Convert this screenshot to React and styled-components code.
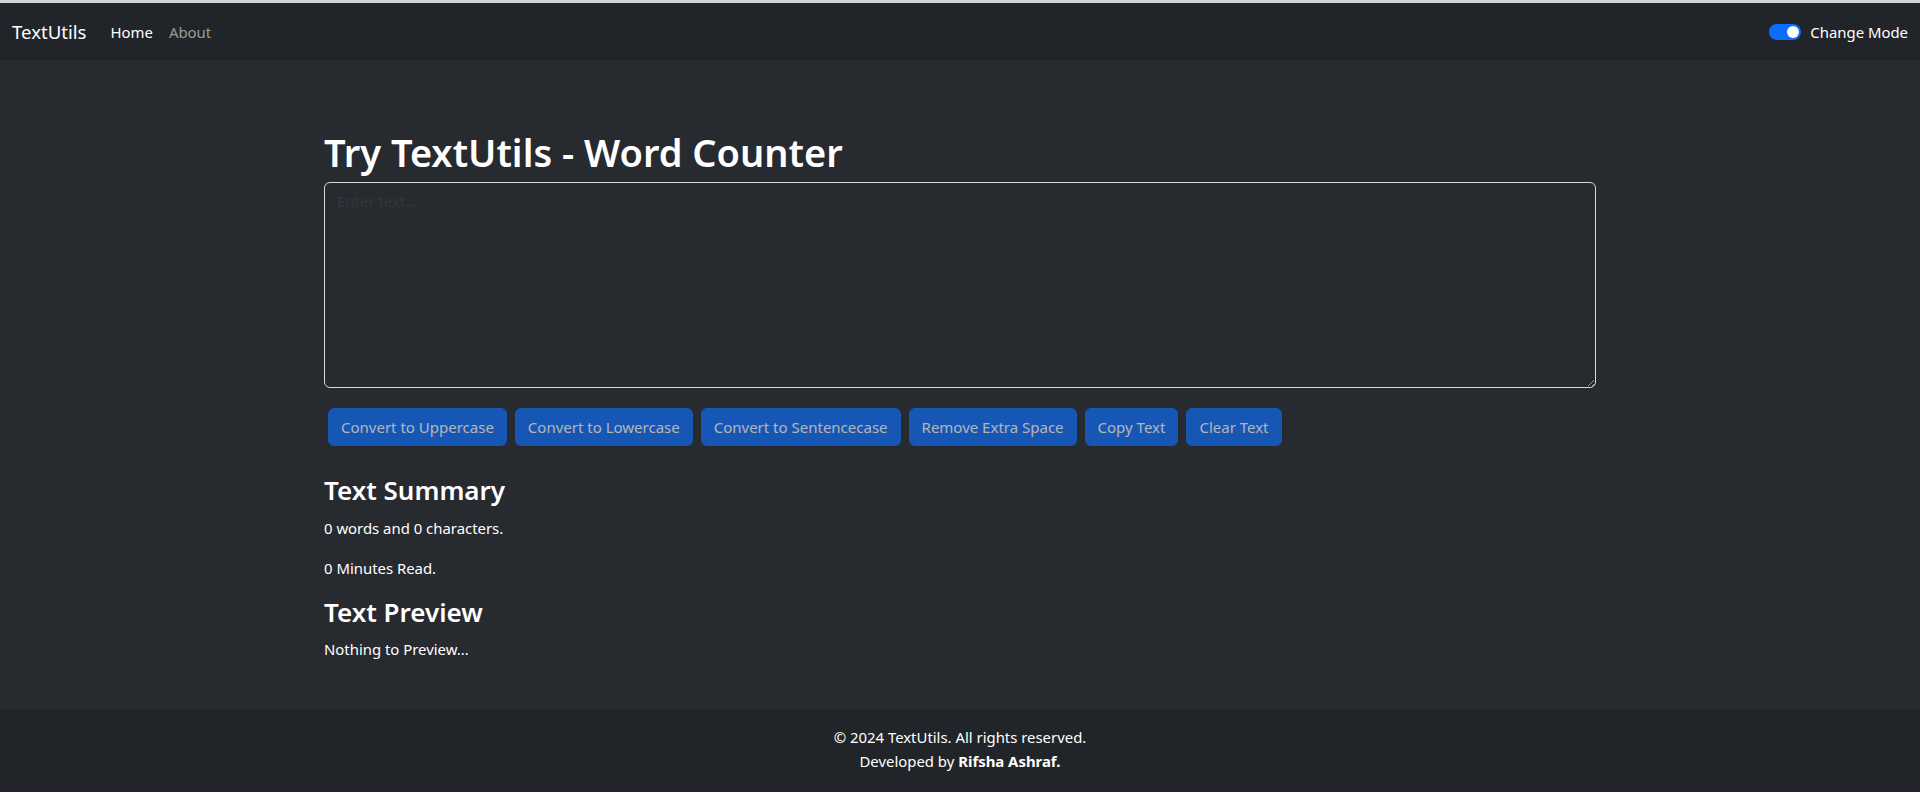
import React from "react";
import styled, { createGlobalStyle } from "styled-components";

const FONT = `"Noto Sans", "Open Sans", Arial, sans-serif`;

const GlobalStyle = createGlobalStyle`
  *, *::before, *::after { box-sizing: border-box; }
  html, body { margin: 0; padding: 0; }
  body {
    font-family: ${FONT};
    font-size: 14.9px;
    line-height: 24px;
    color: #ffffff;
    background: #272a2f;
  }
`;

const Page = styled.div`
  min-height: 100vh;
  display: flex;
  flex-direction: column;
  background: #272a2f;
`;

const TopStrip = styled.div`
  height: 3px;
  background: #d2d2d2;
  flex: none;
`;

const Navbar = styled.nav`
  height: 57px;
  flex: none;
  background: #212529;
  display: flex;
  align-items: center;
  padding: 0 12px 0 12px;
`;

const Brand = styled.a`
  font-size: 18.6px;
  line-height: 30px;
  color: #ffffff;
  text-decoration: none;
  margin-right: 16px;
`;

const NavList = styled.ul`
  list-style: none;
  margin: 0;
  padding: 0;
  display: flex;
`;

const NavLink = styled.a`
  display: block;
  padding: 8px 8px;
  font-size: 14.9px;
  line-height: 24px;
  text-decoration: none;
  color: ${(p) => (p.$active ? "#ffffff" : "rgba(255,255,255,0.55)")};
`;

const ModeToggle = styled.label`
  margin-left: auto;
  display: flex;
  align-items: center;
  gap: 9px;
  font-size: 14.9px;
  line-height: 24px;
  color: #ffffff;
`;

const SwitchTrack = styled.span`
  width: 32px;
  height: 16px;
  border-radius: 8px;
  background: #0d6efd;
  display: flex;
  align-items: center;
  justify-content: flex-end;
  padding: 0 2px;
`;

const SwitchKnob = styled.span`
  width: 12px;
  height: 12px;
  border-radius: 50%;
  background: #ffffff;
`;

const Main = styled.main`
  flex: 1;
  padding-top: 68px;
`;

const Container = styled.div`
  width: 1272px;
  margin: 0 auto;
`;

const Title = styled.h1`
  margin: 0 0 6px;
  font-size: 38px;
  line-height: 48px;
  font-weight: 600;
  color: #ffffff;
`;

const TextArea = styled.textarea`
  display: block;
  width: 100%;
  height: 206px;
  padding: 6px 12px;
  font-family: ${FONT};
  font-size: 14.9px;
  line-height: 24px;
  color: #ffffff;
  background: #272a2f;
  border: 1px solid #d6d8db;
  border-radius: 6px;
  resize: vertical;
  outline: none;
  &::placeholder {
    color: #33373c;
  }
`;

const ButtonRow = styled.div`
  display: flex;
  gap: 8px;
  padding: 0 4px;
  margin-top: 20px;
`;

const ActionButton = styled.button`
  height: 38px;
  padding: 6px 12px;
  font-family: ${FONT};
  font-size: 15px;
  line-height: 24px;
  color: #ffffff;
  background: #0d6efd;
  border: 1px solid #0d6efd;
  border-radius: 6px;
  opacity: 0.65;
  cursor: default;
`;

const SectionTitle = styled.h3`
  margin: ${(p) => (p.$first ? "28px" : "0")} 0 8px;
  font-size: 26px;
  line-height: 33.6px;
  font-weight: 600;
  color: #ffffff;
`;

const Para = styled.p`
  margin: 0 0 16px;
  font-size: 14.9px;
  line-height: 24px;
  color: #ffffff;
`;

const Footer = styled.footer`
  height: 83px;
  flex: none;
  background: #212529;
  padding-top: 16px;
  text-align: center;
  font-size: 14.9px;
  line-height: 24px;
  color: #ffffff;
`;

const FooterLine = styled.div``;

const Strong = styled.strong`
  font-weight: 700;
`;

const buttons = [
  "Convert to Uppercase",
  "Convert to Lowercase",
  "Convert to Sentencecase",
  "Remove Extra Space",
  "Copy Text",
  "Clear Text",
];

export default function App() {
  return (
    <Page>
      <GlobalStyle />
      <TopStrip />
      <Navbar>
        <Brand href="#">TextUtils</Brand>
        <NavList>
          <li>
            <NavLink href="#" $active>
              Home
            </NavLink>
          </li>
          <li>
            <NavLink href="#">About</NavLink>
          </li>
        </NavList>
        <ModeToggle>
          <SwitchTrack>
            <SwitchKnob />
          </SwitchTrack>
          Change Mode
        </ModeToggle>
      </Navbar>
      <Main>
        <Container>
          <Title>Try TextUtils - Word Counter</Title>
          <TextArea placeholder="Enter text..." />
          <ButtonRow>
            {buttons.map((b) => (
              <ActionButton key={b} disabled>
                {b}
              </ActionButton>
            ))}
          </ButtonRow>
          <SectionTitle $first>Text Summary</SectionTitle>
          <Para>0 words and 0 characters.</Para>
          <Para>0 Minutes Read.</Para>
          <SectionTitle>Text Preview</SectionTitle>
          <Para>Nothing to Preview...</Para>
        </Container>
      </Main>
      <Footer>
        <FooterLine>© 2024 TextUtils. All rights reserved.</FooterLine>
        <FooterLine>
          Developed by <Strong>Rifsha Ashraf.</Strong>
        </FooterLine>
      </Footer>
    </Page>
  );
}
